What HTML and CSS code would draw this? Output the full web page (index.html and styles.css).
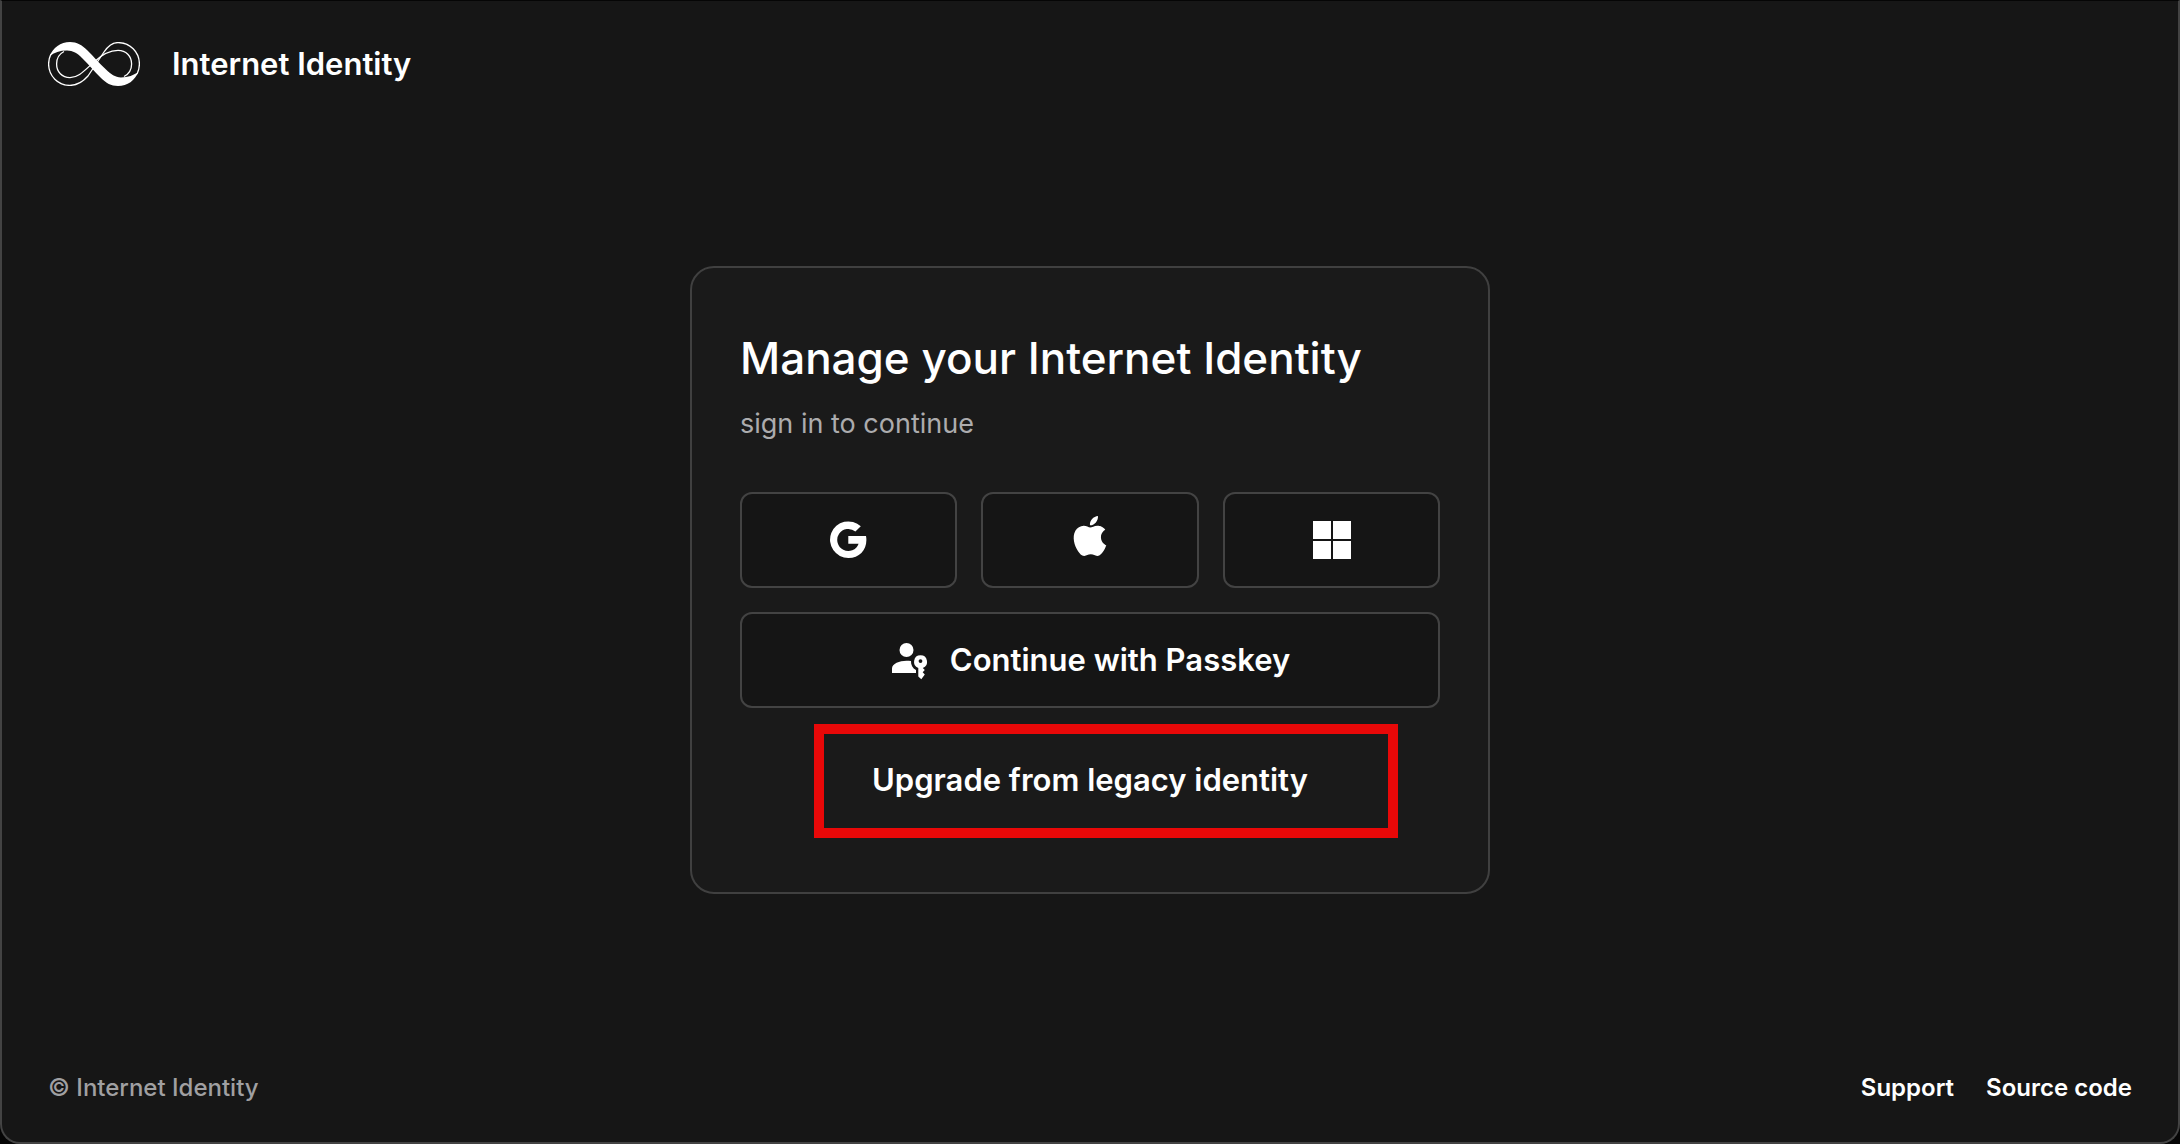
FILE: index.html
```html
<!DOCTYPE html>
<html lang="en">
<head>
<meta charset="utf-8">
<meta name="viewport" content="width=device-width, initial-scale=1">
<title>Internet Identity</title>
<link rel="stylesheet" href="styles.css">
</head>
<body>
<div class="window">
  <header class="header">
    <svg class="logo" viewBox="0 0 92 44" aria-hidden="true">
      <g fill="none" stroke="#fff" stroke-width="1.3">
        <path d="M3 12C1.500 15 .6 18 .6 22C.6 34 10 43.400 22 43.400C30 43.400 36 38.500 40 34L56 10C60 4 65 .6 70 .6C82 .6 91.400 10 91.400 22C91.400 26 90.500 29 89 32" stroke-linejoin="round"/>
        <path d="M16 9.500C11 12 8.600 16.500 8.600 22C8.600 30 14 35.600 22 35.600C30 35.600 35 30 46 20C54 12.500 61 8.400 70 8.400C78 8.400 83.600 14 83.600 22C83.600 27.500 81 32 76 34.500"/>
      </g>
      <path fill="#fff" d="M1.500 14.500C5 5.500 12.500 0 22 0C29 0 34 3 39 8C46 15 51 21 58 27.500C63 32 67 35.400 73 35.400C80 35.400 86 33.500 90.500 29.500C87 38.500 79.500 44 70 44C63 44 58 41 53 36C46 29 41 23 34 16C29.500 11.500 25 8.600 19 8.600C12 8.600 6 10.500 1.500 14.500Z"/>
    </svg>
    <span class="brand">Internet Identity</span>
  </header>

  <main class="main">
    <section class="card">
      <h1 class="title">Manage your Internet Identity</h1>
      <p class="subtitle">sign in to continue</p>
      <div class="actions">
        <div class="providers">
          <button class="button" type="button" aria-label="Continue with Google">
            <svg class="icon" viewBox="-5 -5 48 48" fill="currentColor"><path d="M30.800 5.300L25.400 10.600A11 11 0 1 0 28.600 22.700H18.300V15H36Q36.400 17 36.400 19C36.400 29.500 29 37 18.500 37A18.300 18.300 0 1 1 30.800 5.300Z"/></svg>
          </button>
          <button class="button" type="button" aria-label="Continue with Apple">
            <svg class="icon" viewBox="-2.400 0 28.800 28.800" fill="currentColor"><path d="M12.152 6.896c-.948 0-2.415-1.078-3.960-1.040-2.040.027-3.910 1.183-4.961 3.014-2.117 3.675-.546 9.103 1.519 12.090 1.013 1.454 2.208 3.090 3.792 3.039 1.520-.065 2.090-.987 3.935-.987 1.831 0 2.350.987 3.960.948 1.637-.026 2.676-1.480 3.676-2.948 1.156-1.688 1.636-3.325 1.662-3.415-.039-.013-3.182-1.221-3.220-4.857-.026-3.040 2.480-4.494 2.597-4.559-1.429-2.090-3.623-2.324-4.390-2.376-2-.156-3.675 1.090-4.610 1.090zM15.530 3.830c.843-1.012 1.400-2.427 1.245-3.830-1.207.052-2.662.805-3.532 1.818-.780.896-1.454 2.338-1.273 3.714 1.338.104 2.715-.688 3.559-1.701"/></svg>
          </button>
          <button class="button" type="button" aria-label="Continue with Microsoft">
            <svg class="icon" viewBox="-1 0 48 48" fill="currentColor" shape-rendering="crispEdges"><path d="M5 5h18v18H5zM25 5h18v18H25zM5 25h18v18H5zM25 25h18v18H25z"/></svg>
          </button>
        </div>
        <button class="button" type="button">
          <svg class="icon-small" viewBox="0 0 40 40" fill="currentColor">
            <circle cx="16.500" cy="10" r="7"/>
            <path d="M2 33V28.500C2 23.500 9.500 20.700 16.500 20.700C18 20.700 19.500 20.800 21 21C20.800 25 22.500 28.200 26 30V33Z"/>
            <path fill-rule="evenodd" d="M30.500 15.300A6.500 6.500 0 0 1 32.800 27.900L34.800 30L32.700 32.300L34.800 34.600L31.300 39.300L28.300 36.500V27.900A6.500 6.500 0 0 1 30.500 15.300ZM30.500 19.200A1.900 1.900 0 1 0 30.500 23A1.900 1.900 0 1 0 30.500 19.200Z"/>
          </svg>
          Continue with Passkey
        </button>
        <div class="upgrade">
          <button class="button button-plain" type="button">Upgrade from legacy identity</button>
          <span class="highlight"></span>
        </div>
      </div>
    </section>
  </main>

  <footer class="footer">
    <span>© Internet Identity</span>
    <nav class="links">
      <a class="link" href="#support">Support</a>
      <a class="link" href="#source">Source code</a>
    </nav>
  </footer>
</div>
</body>
</html>
```
FILE: styles.css
```css
* {
  box-sizing: border-box;
}

body {
  margin: 0;
  background: #050505;
  color: #fff;
  font-family: Inter, "Liberation Sans", sans-serif;
}

.window {
  display: flex;
  flex-direction: column;
  min-height: 100vh;
  background: #161616;
  border: 2px solid #434343;
  border-top: 1px solid #050505;
  border-radius: 0 0 20px 20px;
}

.header {
  display: flex;
  align-items: center;
  gap: 32px;
  height: 126px;
  padding: 0 46px;
}

.logo {
  width: 92px;
  height: 44px;
}

.brand {
  font-size: 31px;
  font-weight: 600;
  line-height: 40px;
}

.main {
  display: flex;
  flex: 1;
  align-items: center;
  justify-content: center;
}

.card {
  width: 100%;
  max-width: 800px;
  padding: 60px 48px 64px;
  background: #1a1a1a;
  border: 2px solid #404040;
  border-radius: 24px;
}

.title {
  margin: 0 0 16px;
  font-size: 44px;
  font-weight: 500;
  line-height: 60px;
}

.subtitle {
  margin: 0 0 48px;
  color: #acacae;
  font-size: 27px;
  line-height: 40px;
}

.actions {
  display: grid;
  gap: 24px;
}

.providers {
  display: grid;
  grid-template-columns: repeat(3, 1fr);
  gap: 24px;
}

.button {
  display: flex;
  align-items: center;
  justify-content: center;
  gap: 20px;
  width: 100%;
  height: 96px;
  padding: 0;
  background: #151515;
  border: 2px solid #434343;
  border-radius: 12px;
  color: #fff;
  font: 600 31px/40px Inter, "Liberation Sans", sans-serif;
  cursor: pointer;
}

.button-plain {
  background: transparent;
  border-color: transparent;
}

.icon {
  width: 48px;
  height: 48px;
}

.icon-small {
  width: 40px;
  height: 40px;
}

.upgrade {
  position: relative;
}

/* Callout frame drawn over the upgrade option */
.highlight {
  position: absolute;
  inset: -8px 42px -10px 74px;
  border: 10px solid #e80808;
  pointer-events: none;
}

.footer {
  display: flex;
  align-items: center;
  justify-content: space-between;
  height: 109px;
  padding: 0 46px;
  color: #a0a0a2;
  font-size: 24px;
  font-weight: 500;
  line-height: 32px;
}

.links {
  display: flex;
  gap: 32px;
}

.link {
  color: #fff;
  font-weight: 600;
  text-decoration: none;
}
```
